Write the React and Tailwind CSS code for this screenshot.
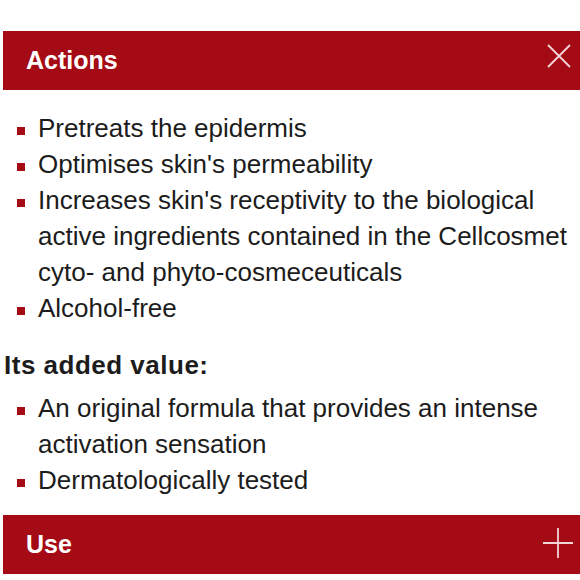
const actions = [
  "Pretreats the epidermis",
  "Optimises skin's permeability",
  "Increases skin's receptivity to the biological active ingredients contained in the Cellcosmet cyto- and phyto-cosmeceuticals",
  "Alcohol-free",
];

const addedValue = [
  "An original formula that provides an intense activation sensation",
  "Dermatologically tested",
];

function Bullets({ items }) {
  return (
    <ul className="pl-[17px] pr-2">
      {items.map((item) => (
        <li key={item} className="flex text-[26px] leading-[36px] text-[#1c1c1c]">
          <span className="mt-[17px] mr-[13px] h-[8px] w-[8px] shrink-0 bg-[#a50b15]" />
          <span>{item}</span>
        </li>
      ))}
    </ul>
  );
}

function Bar({ title, icon }) {
  return (
    <div className="ml-[3px] flex h-[59px] items-center justify-between bg-[#a50b15] pl-[23px] pr-[7px] text-white">
      <h2 className="text-[25px] font-bold">{title}</h2>
      {icon}
    </div>
  );
}

export default function App() {
  return (
    <div className="h-[580px] w-[580px] overflow-hidden bg-white pt-[31px] font-['Liberation_Sans',Arial,sans-serif]">
      <Bar
        title="Actions"
        icon={
          <svg width="24" height="24" viewBox="0 0 24 24" className="-mt-[9px] mr-[2px]" fill="none" stroke="#f3d5d7" strokeWidth="1.8">
            <path d="M1 1 L23 23 M23 1 L1 23" />
          </svg>
        }
      />
      <div className="pt-[20px]">
        <Bullets items={actions} />
      </div>
      <h3 className="mt-[21px] pl-[4px] text-[26px] font-bold leading-[36px] tracking-[0.5px] text-[#1c1c1c]">Its added value:</h3>
      <div className="pt-[7px]">
        <Bullets items={addedValue} />
      </div>
      <div className="mt-[17px]">
        <Bar
          title="Use"
          icon={
            <svg width="30" height="30" viewBox="0 0 30 30" className="-mt-[4px]" fill="none" stroke="#f3d5d7" strokeWidth="1.8">
              <path d="M15 0 V30 M0 15 H30" />
            </svg>
          }
        />
      </div>
    </div>
  );
}
